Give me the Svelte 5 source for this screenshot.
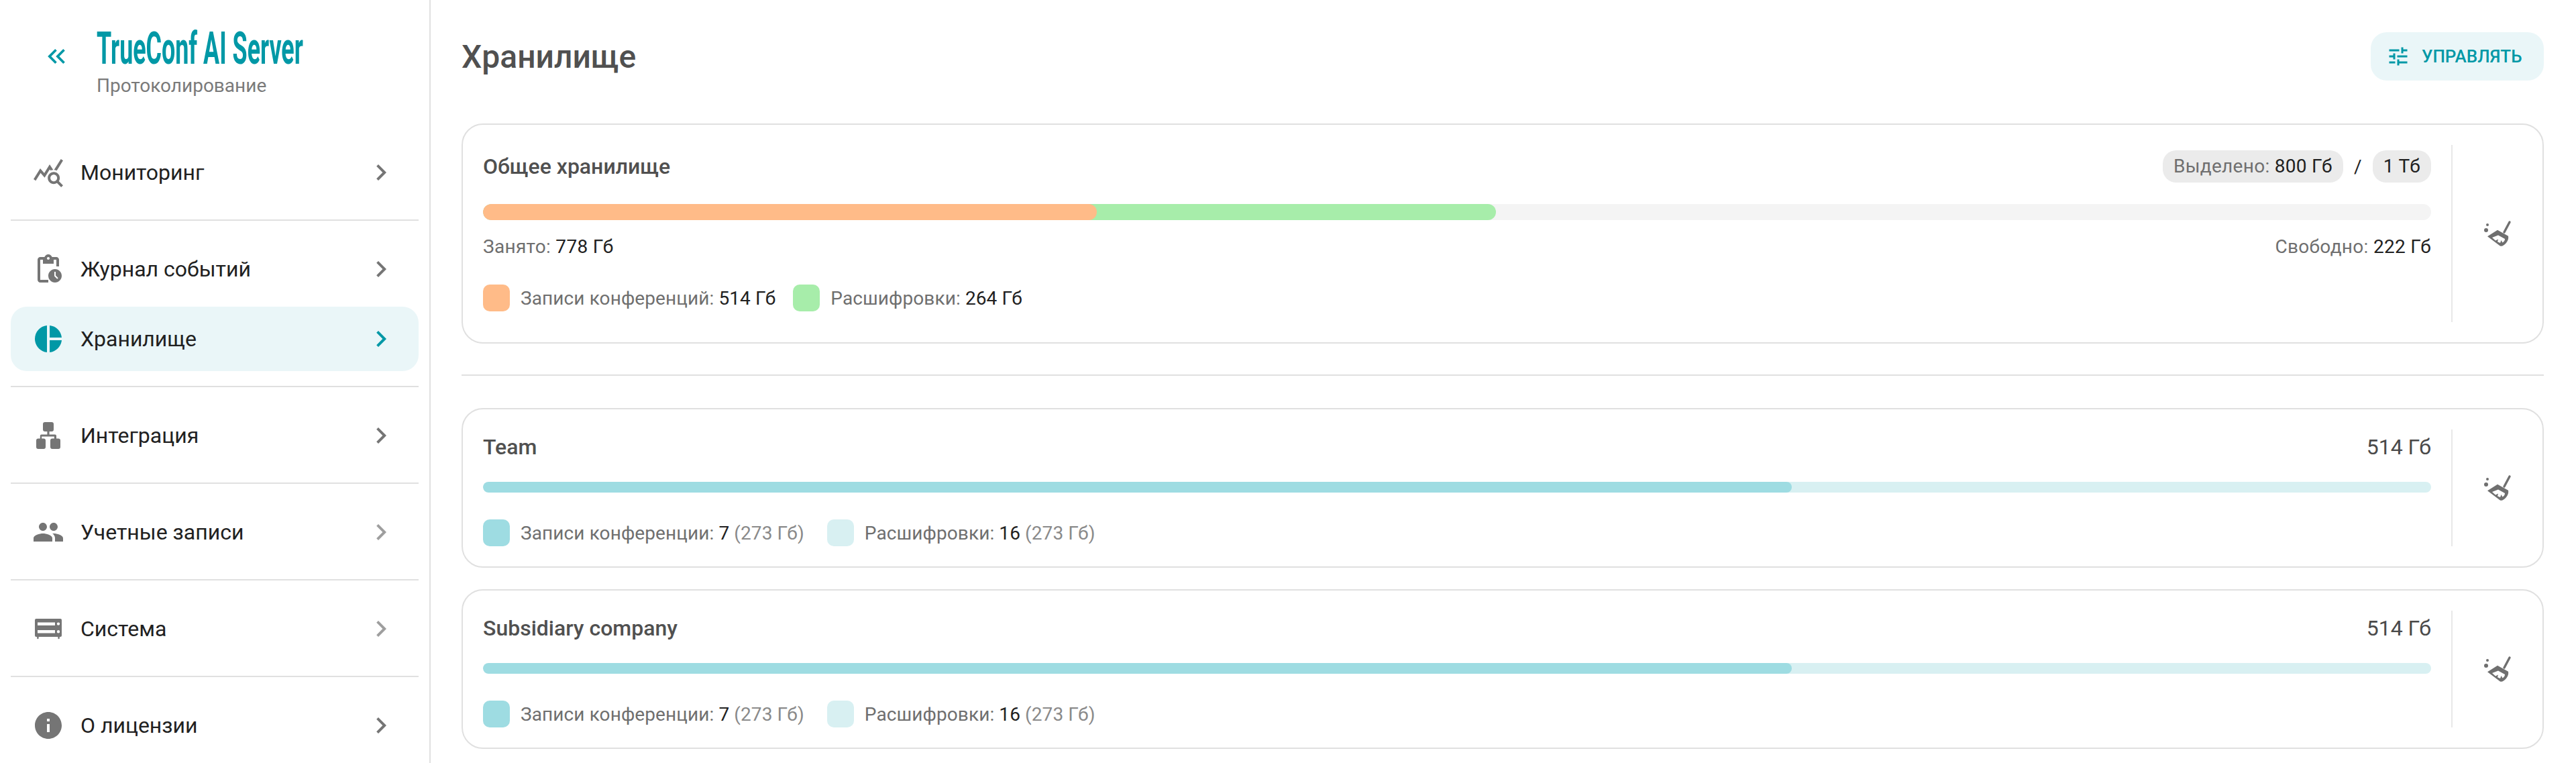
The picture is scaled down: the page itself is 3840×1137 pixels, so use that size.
<script>
	const icons = {
		query: 'M19.88 18.47c.44-.7.7-1.51.7-2.39 0-2.49-2.01-4.5-4.5-4.5s-4.5 2.01-4.5 4.5 2.01 4.5 4.49 4.5c.88 0 1.7-.26 2.39-.7L21.58 23 23 21.58l-3.12-3.11zm-3.8.11c-1.38 0-2.5-1.12-2.5-2.5s1.12-2.5 2.5-2.5 2.5 1.12 2.5 2.5-1.12 2.5-2.5 2.5zm-.36-8.5c-.74.02-1.45.18-2.1.45l-.55-.83-3.8 6.18-3.01-3.52-3.63 5.81L1 17l5-8 3 3.5L13 6l2.72 4.08zm2.59.5c-.64-.28-1.33-.45-2.05-.49L21.38 2 23 3.18l-4.69 7.4z',
		pending: 'M17 12c-2.76 0-5 2.24-5 5s2.24 5 5 5 5-2.24 5-5-2.24-5-5-5zm1.65 7.35L16.5 17.2V14h1v2.79l1.85 1.85-.7.71zM18 3h-3.18C14.4 1.84 13.3 1 12 1s-2.4.84-2.82 2H6c-1.1 0-2 .9-2 2v15c0 1.1.9 2 2 2h6v-2H6V5h2v3h8V5h2v5h2V5c0-1.1-.9-2-2-2zm-6 2c-.55 0-1-.45-1-1s.45-1 1-1 1 .45 1 1-.45 1-1 1z',
		pie: 'M11 2v20c-5.07-.5-9-4.79-9-10s3.93-9.5 9-10zm2.03 0v8.99H22c-.47-4.74-4.24-8.52-8.97-8.99zm0 11.01V22c4.74-.47 8.5-4.25 8.97-8.99h-8.97z',
		tree: 'M9.500 2h5a1.500 1.500 0 0 1 1.500 1.500v4A1.500 1.500 0 0 1 14.500 9h-1.700v2.200H17a1 1 0 0 1 1 1v2h1.500a1.500 1.500 0 0 1 1.500 1.500v4.800a1.500 1.500 0 0 1-1.500 1.500h-4.500a1.500 1.500 0 0 1-1.500-1.500v-4.800a1.500 1.500 0 0 1 1.500-1.500h1.400v-1.400H7.100v1.400h1.400a1.500 1.500 0 0 1 1.500 1.500v4.800A1.500 1.500 0 0 1 8.500 22H4.500A1.500 1.500 0 0 1 3 20.500v-4.800a1.500 1.500 0 0 1 1.500-1.500h1.400v-2a1 1 0 0 1 1-1h4.300V9H9.500A1.500 1.500 0 0 1 8 7.500v-4A1.500 1.500 0 0 1 9.500 2z',
		people: 'M16 11c1.66 0 2.99-1.34 2.99-3S17.66 5 16 5c-1.66 0-3 1.34-3 3s1.34 3 3 3zm-8 0c1.66 0 2.99-1.34 2.99-3S9.66 5 8 5C6.34 5 5 6.34 5 8s1.34 3 3 3zm0 2c-2.33 0-7 1.17-7 3.5V19h14v-2.5c0-2.33-4.67-3.5-7-3.5zm8 0c-.29 0-.62.02-.97.05 1.16.84 1.97 1.97 1.97 3.45V19h6v-2.5c0-2.33-4.67-3.5-7-3.5z',
		server: 'M3 4.500h18a1 1 0 0 1 1 1V17a1 1 0 0 1-1 1h-.6v1a.6.6 0 0 1-1.200 0v-1H4.800v1a.6.6 0 0 1-1.200 0v-1H3a1 1 0 0 1-1-1V5.500a1 1 0 0 1 1-1zM4 7.200v2.300h13V7.200H4zm15.500 0a1.100 1.100 0 1 0 0 2.200 1.100 1.100 0 0 0 0-2.200zM4 13v2.300h13V13H4zm15.500 0a1.100 1.100 0 1 0 0 2.200 1.100 1.100 0 0 0 0-2.200z',
		info: 'M12 2C6.48 2 2 6.48 2 12s4.48 10 10 10 10-4.48 10-10S17.52 2 12 2zm1 15h-2v-6h2v6zm0-8h-2V7h2v2z'
	}

	const chevron = 'M8.59 16.59 13.17 12 8.59 7.41 10 6l6 6-6 6z'

	const groups = [
		[{label: 'Мониторинг', icon: 'query'}],
		[{label: 'Журнал событий', icon: 'pending'}, {label: 'Хранилище', icon: 'pie', active: true}],
		[{label: 'Интеграция', icon: 'tree'}],
		[{label: 'Учетные записи', icon: 'people', dim: true}],
		[{label: 'Система', icon: 'server', dim: true}],
		[{label: 'О лицензии', icon: 'info'}]
	]

	const companies = ['Team', 'Subsidiary company']
</script>

{#snippet broom()}
	<svg class="broom" viewBox="0 0 48 48">
		<circle cx="7" cy="19" r="3" />
		<circle cx="9" cy="11" r="2" />
		<path d="M42 7 34 22" class="handle" />
		<path d="M9 28.300 24 18.700 40 27.700C41 33 38 38 33 41.500 31 43 29 43 27.500 42.200Z" />
		<path d="M16 30 25 26.500 35 32C35 34 34 36 31.500 37.500L29.500 34 28 38 24 36.300 25 32.500 21 34.500Z" class="bristle" />
	</svg>
{/snippet}

<div class="page">
	<aside>
		<header>
			<svg class="back" viewBox="0 0 24 24"><path d="M17.59 18L19 16.590 14.420 12 19 7.410 17.590 6l-6 6zM11 18l1.410-1.410L7.830 12l4.580-4.590L11 6l-6 6z" /></svg>
			<div class="brand">
				<div class="logo">TrueConf AI Server</div>
				<div class="sub">Протоколирование</div>
			</div>
		</header>
		<nav>
			{#each groups as group}
				<div class="group">
					{#each group as item}
						<div class="item" class:active={item.active} class:dim={item.dim}>
							<svg class="icon" viewBox="0 0 24 24"><path d={icons[item.icon]} fill-rule="evenodd" /></svg>
							<span>{item.label}</span>
							<svg class="chev" viewBox="0 0 24 24"><path d={chevron} /></svg>
						</div>
					{/each}
				</div>
			{/each}
		</nav>
	</aside>

	<main>
		<div class="top">
			<h1>Хранилище</h1>
			<button>
				<svg viewBox="0 0 24 24"><path d="M3 17v2h6v-2H3zM3 5v2h10V5H3zm10 16v-2h8v-2h-8v-2h-2v6h2zM7 9v2H3v2h4v2h2V9H7zm14 4v-2H11v2h10zm-6-4h2V7h4V5h-4V3h-2v6z" /></svg>
				УПРАВЛЯТЬ
			</button>
		</div>

		<section class="card total">
			<div class="body">
				<div class="head">
					<h2>Общее хранилище</h2>
					<div class="pills">
						<span class="pill">Выделено: <b>800 Гб</b></span>
						<i>/</i>
						<span class="pill"><b>1 Тб</b></span>
					</div>
				</div>
				<div class="bar big">
					<div class="seg green" style="width: 52%"></div>
					<div class="seg orange" style="width: 31.5%"></div>
				</div>
				<div class="used">
					<span>Занято: <b>778 Гб</b></span>
					<span>Свободно: <b>222 Гб</b></span>
				</div>
				<div class="legend">
					<span class="swatch orange"></span>
					<span>Записи конференций: <b>514 Гб</b></span>
					<span class="swatch green"></span>
					<span>Расшифровки: <b>264 Гб</b></span>
				</div>
			</div>
			<div class="action">{@render broom()}</div>
		</section>

		<hr />

		{#each companies as name}
			<section class="card company">
				<div class="body">
					<div class="head">
						<h2>{name}</h2>
						<span class="size">514 Гб</span>
					</div>
					<div class="bar small">
						<div class="seg teal" style="width: 67.2%"></div>
					</div>
					<div class="legend wide">
						<span class="swatch teal"></span>
						<span>Записи конференции: <b>7</b> <em>(273 Гб)</em></span>
						<span class="swatch pale"></span>
						<span>Расшифровки: <b>16</b> <em>(273 Гб)</em></span>
					</div>
				</div>
				<div class="action">{@render broom()}</div>
			</section>
		{/each}
	</main>
</div>

<style>
	:global(body) {
		margin: 0;
		background: #fff;
		font-family: Roboto, "Noto Sans", sans-serif;
		color: #212121;
	}

	.page {
		display: flex;
		height: 1137px;
		overflow: hidden;
	}

	aside {
		flex: none;
		border-right: 2px solid #e0e0e0;
		padding: 0 16px;
		box-sizing: content-box;
		width: 608px;
	}

	header {
		height: 185px;
		display: flex;
		align-items: flex-start;
	}

	.back {
		width: 44px;
		height: 44px;
		margin: 62px 38px 0 46px;
		fill: #0098a6;
		flex: none;
	}

	.brand {
		padding-top: 38px;
	}

	.logo {
		font-size: 67px;
		line-height: 68px;
		font-weight: 700;
		color: #0098a6;
		white-space: nowrap;
		transform: scaleX(0.535);
		transform-origin: left center;
		width: 308px;
	}

	.sub {
		font-size: 28px;
		line-height: 36px;
		color: #7a7a7a;
		margin-top: 4px;
	}

	.group {
		padding: 24px 0 22px;
		border-bottom: 2px solid #e0e0e0;
		display: flex;
		flex-direction: column;
		gap: 8px;
	}

	.group:last-child {
		border-bottom: 0;
	}

	.item {
		height: 96px;
		display: flex;
		align-items: center;
		padding: 0 32px;
		border-radius: 24px;
		font-size: 32px;
		color: #212121;
	}

	.item span {
		flex: 1;
		margin-left: 24px;
	}

	.item.active {
		background: #eaf6f8;
	}

	.icon, .chev {
		width: 48px;
		height: 48px;
		fill: #757575;
		flex: none;
	}

	.dim .chev {
		fill: #9e9e9e;
	}

	.active .icon, .active .chev {
		fill: #0098a6;
	}

	main {
		flex: 1;
		min-width: 0;
		padding: 48px 48px 0 46px;
	}

	.top {
		display: flex;
		justify-content: space-between;
		align-items: center;
		height: 72px;
		margin-bottom: 64px;
	}

	h1 {
		margin: 0;
		font-size: 48px;
		font-weight: 500;
		color: #505050;
	}

	button {
		height: 72px;
		width: 258px;
		border: 0;
		border-radius: 24px;
		background: #eaf6f8;
		color: #0098a6;
		font: 500 26px Roboto, sans-serif;
		display: flex;
		align-items: center;
		gap: 17px;
		padding: 0 0 0 23px;
	}

	button svg {
		width: 36px;
		height: 36px;
		fill: #0098a6;
	}

	.card {
		border: 2px solid #e0e0e0;
		border-radius: 32px;
		display: flex;
		box-sizing: border-box;
		padding: 30px 0 30px 30px;
	}

	.card.total {
		height: 328px;
	}

	.card.company {
		height: 238px;
		margin-bottom: 32px;
	}

	.body {
		flex: 1;
		min-width: 0;
		margin-right: 30px;
	}

	.action {
		width: 134px;
		flex: none;
		border-left: 2px solid #e8e8e8;
		display: flex;
		align-items: center;
		justify-content: center;
	}

	.broom {
		width: 48px;
		height: 48px;
		fill: #6f6f6f;
	}

	.broom .handle {
		fill: none;
		stroke: #6f6f6f;
		stroke-width: 3.400;
		stroke-linecap: round;
	}

	.broom .bristle {
		fill: #fff;
	}

	.head {
		display: flex;
		justify-content: space-between;
		align-items: center;
	}

	.total .head {
		height: 48px;
		margin-top: 8px;
	}

	.company .head {
		height: 52px;
	}

	h2 {
		margin: 0;
		font-size: 32px;
		font-weight: 500;
		color: #505050;
	}

	.pills {
		display: flex;
		align-items: center;
		font-size: 28px;
		letter-spacing: 0.3px;
		color: #6f6f6f;
	}

	.pills i {
		font-style: normal;
		color: #212121;
		width: 44px;
		text-align: center;
	}

	.pill {
		height: 48px;
		line-height: 48px;
		padding: 0 16px;
		background: #ebebeb;
		border-radius: 20px;
	}

	b {
		font-weight: 400;
		color: #212121;
	}

	em {
		font-style: normal;
		color: #8a8a8a;
	}

	.size {
		font-size: 32px;
		color: #4a4a4a;
	}

	.bar {
		position: relative;
		overflow: hidden;
	}

	.bar.big {
		height: 24px;
		margin-top: 32px;
		border-radius: 12px;
		background: #f4f4f4;
	}

	.bar.small {
		height: 16px;
		margin-top: 26px;
		border-radius: 8px;
		background: #d8f0f2;
	}

	.seg {
		position: absolute;
		left: 0;
		top: 0;
		bottom: 0;
		border-radius: inherit;
	}

	.orange { background: #ffbb88; }
	.green { background: #a7edaa; }
	.teal { background: #9edce2; }
	.pale { background: #d8f0f2; }

	.used {
		display: flex;
		justify-content: space-between;
		font-size: 28px;
		letter-spacing: 0.3px;
		line-height: 40px;
		margin-top: 20px;
		color: #6f6f6f;
	}

	.legend {
		display: flex;
		align-items: center;
		font-size: 28px;
		letter-spacing: 0.1px;
		color: #6f6f6f;
		margin-top: 36px;
	}

	.legend.wide {
		margin-top: 40px;
	}

	.swatch {
		width: 40px;
		height: 40px;
		border-radius: 10px;
		margin-right: 16px;
	}

	.legend span:nth-child(3) {
		margin-left: 26px;
	}

	.legend.wide span:nth-child(3) {
		margin-left: 34px;
	}

	hr {
		border: 0;
		border-top: 2px solid #e0e0e0;
		margin: 46px 0 48px;
	}
</style>
